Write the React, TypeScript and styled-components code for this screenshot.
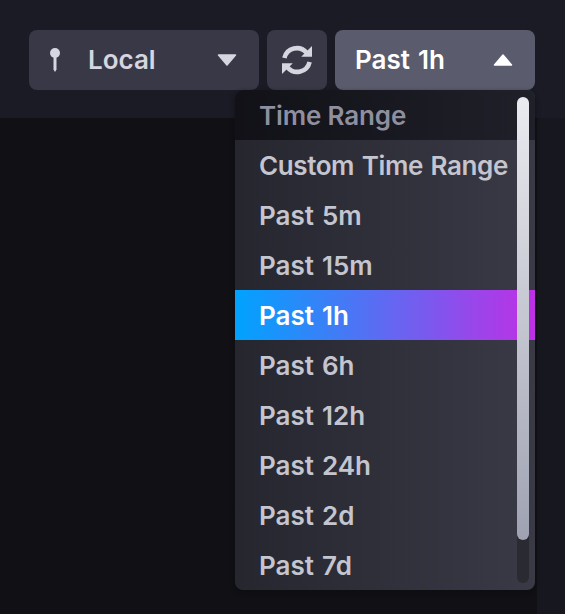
import React from "react";
import styled, { createGlobalStyle } from "styled-components";

const Global = createGlobalStyle`
  html, body { margin: 0; padding: 0; height: 100%; background: #101015; overflow: hidden; }
  #root { height: 100%; }
  * { box-sizing: border-box; }
`;

const Page = styled.div`
  width: 565px;
  height: 614px;
  display: flex;
  flex-direction: column;
  font-family: Inter, "Liberation Sans", sans-serif;
  font-size: 26px;
  font-weight: 600;
  line-height: 32px;
  word-spacing: 1.5px;
`;

const Header = styled.header`
  height: 118px;
  flex: none;
  padding: 30px 30px 0 29px;
  display: flex;
  justify-content: flex-end;
  align-items: flex-start;
  gap: 8px;
  background: #1a1b24;
`;

const Body = styled.div`
  flex: 1;
  display: flex;
`;

const Main = styled.main`
  flex: 1;
  background: #101015;
`;

const SideColumn = styled.aside`
  width: 28px;
  background: #17181f;
`;

const Button = styled.button<{ $active?: boolean; $width: number }>`
  width: ${(p) => p.$width}px;
  height: 60px;
  flex: none;
  border: 0;
  border-radius: 8px;
  padding: 0 22px 1px ${(p) => (p.$active ? 20 : 21)}px;
  display: flex;
  align-items: center;
  font: inherit;
  word-spacing: inherit;
  color: ${(p) => (p.$active ? "#ffffff" : "#d5d6e0")};
  background: ${(p) => (p.$active ? "#5a5b6c" : "#383846")};
`;

const IconButton = styled(Button)`
  padding: 0;
  justify-content: center;
`;

const ButtonLabel = styled.span`
  flex: 1;
  text-align: left;
`;

const PinSlot = styled.span`
  width: 39px;
  flex: none;
  display: flex;
  margin-left: -1px;
`;

const Anchor = styled.div`
  position: relative;
  flex: none;
`;

const Menu = styled.div`
  position: absolute;
  top: 100%;
  right: 0;
  width: 300px;
  height: 500px;
  border-radius: 8px;
  overflow: hidden;
  background: linear-gradient(90deg, #25262e, #3a3a47);
  box-shadow: 0 2px 4px 1px rgba(10, 10, 14, 0.4);
`;

const MenuHeader = styled.div`
  height: 50px;
  padding: 1px 0 0 24px;
  display: flex;
  align-items: center;
  color: #8e8f9f;
  letter-spacing: -0.15px;
  word-spacing: 0;
  background: linear-gradient(90deg, #111117, #1f2029);
`;

const MenuItem = styled.div<{ $selected?: boolean; $tight?: boolean }>`
  height: 50px;
  padding: 1px 0 0 24px;
  display: flex;
  align-items: center;
  white-space: nowrap;
  letter-spacing: ${(p) => (p.$tight ? "-0.4px" : "0")};
  color: ${(p) => (p.$selected ? "#ffffff" : "#c4c5ce")};
  background: ${(p) => (p.$selected ? "linear-gradient(90deg, #00a3ff, #bf2fe5)" : "transparent")};
`;

const Track = styled.div`
  position: absolute;
  top: 7px;
  right: 6px;
  bottom: 7px;
  width: 12px;
  border-radius: 6px;
  background: #2a2a33;
`;

const Thumb = styled.div`
  height: 443px;
  border-radius: 6px;
  background: linear-gradient(180deg, #eaebef, #9fa2b2);
`;

const Caret = ({ up, color }: { up?: boolean; color: string }) => (
  <svg width="20" height="12" viewBox="0 0 20 12" style={{ transform: up ? "rotate(180deg)" : undefined, marginTop: 1 }}>
    <path d="M1.5 1 H18.5 L10 11 Z" fill={color} stroke={color} strokeWidth="1.5" strokeLinejoin="round" />
  </svg>
);

const Pin = () => (
  <svg width="12" height="26" viewBox="0 0 12 26">
    <circle cx="6" cy="6" r="5" fill="#d5d6e0" />
    <path d="M4.5 9 H7.5 V22.5 L6 25 L4.5 22.5 Z" fill="#d5d6e0" />
  </svg>
);

const SyncIcon = () => (
  <svg width="32" height="32" viewBox="0 0 32 32" fill="none">
    <g>
      <path d="M3.4 14 A12.7 12.7 0 0 1 25.4 8.6" stroke="#d5d6e0" strokeWidth="4.6" />
      <path d="M31 2 V12.8 H20.2 Z" fill="#d5d6e0" />
    </g>
    <g transform="rotate(180 16 16)">
      <path d="M3.4 14 A12.7 12.7 0 0 1 25.4 8.6" stroke="#d5d6e0" strokeWidth="4.6" />
      <path d="M31 2 V12.8 H20.2 Z" fill="#d5d6e0" />
    </g>
  </svg>
);

const ranges = ["Custom Time Range", "Past 5m", "Past 15m", "Past 1h", "Past 6h", "Past 12h", "Past 24h", "Past 2d", "Past 7d"];

export default function App() {
  return (
    <Page>
      <Global />
      <Header>
        <Button $width={230}>
          <PinSlot>
            <Pin />
          </PinSlot>
          <ButtonLabel>Local</ButtonLabel>
          <Caret color="#d5d6e0" />
        </Button>
        <IconButton $width={60}>
          <SyncIcon />
        </IconButton>
        <Anchor>
          <Button $width={200} $active>
            <ButtonLabel>Past 1h</ButtonLabel>
            <Caret up color="#ffffff" />
          </Button>
          <Menu>
            <MenuHeader>Time Range</MenuHeader>
            {ranges.map((r, i) => (
              <MenuItem key={r} $selected={r === "Past 1h"} $tight={i === 0}>
                {r}
              </MenuItem>
            ))}
            <Track>
              <Thumb />
            </Track>
          </Menu>
        </Anchor>
      </Header>
      <Body>
        <Main />
        <SideColumn />
      </Body>
    </Page>
  );
}
